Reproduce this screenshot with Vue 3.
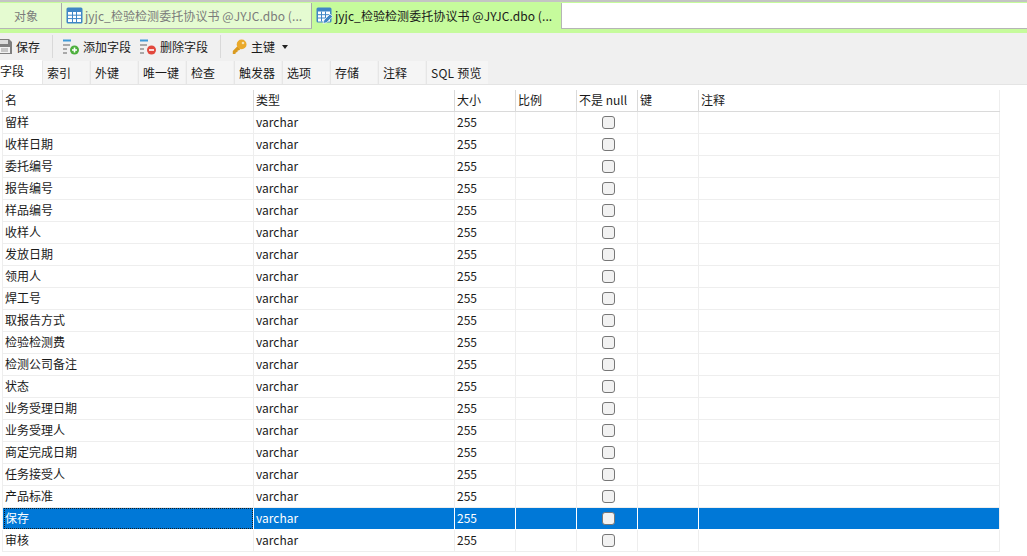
<script setup>
const names = ['留样','收样日期','委托编号','报告编号','样品编号','收样人','发放日期','领用人','焊工号','取报告方式','检验检测费','检测公司备注','状态','业务受理日期','业务受理人','商定完成日期','任务接受人','产品标准','保存','审核']
const tabs = ['索引','外键','唯一键','检查','触发器','选项','存储','注释','SQL 预览']
const headers = ['名','类型','大小','比例','不是 null','键','注释']
const rows = names.map((name, i) => ({ name, selected: i === 18 }))
</script>

<template>
  <div class="app">
    <div class="tabbar">
      <div class="tab objects">对象</div>
      <div class="tab doc">
        <svg class="tabicon" width="17" height="17" viewBox="0 0 17 17">
          <rect x="0.5" y="0.5" width="16" height="16" rx="1.5" fill="#3f86c6"/>
          <path d="M2 5h13v10H2z" fill="#fff"/>
          <path d="M6.5 5v10M10.5 5v10M2 8.2h13M2 11.6h13" stroke="#3f86c6" stroke-width="1"/>
        </svg>
        <span class="muted">jyjc_检验检测委托协议书 @JYJC.dbo (...</span>
      </div>
      <div class="tab doc active">
        <svg class="tabicon" width="17" height="17" viewBox="0 0 17 17">
          <rect x="0.5" y="0.5" width="15" height="15" rx="1.5" fill="#3f86c6"/>
          <path d="M2 4.5h12v10H2z" fill="#fff"/>
          <path d="M5.5 4.5v10M9.5 4.5v10M2 7.7h12M2 11h12" stroke="#3f86c6" stroke-width="1"/>
          <path d="M7 16.5l1-3.5 6-6 2.6 2.6-6 6z" fill="#3f86c6" stroke="#fff" stroke-width="0.7"/>
        </svg>
        <span>jyjc_检验检测委托协议书 @JYJC.dbo (...</span>
      </div>
      <div class="blank"></div>
    </div>

    <div class="toolbar">
      <div class="tool save">
        <svg width="15" height="15" viewBox="0 0 15 15">
          <path d="M0 0h12l3 3v12H0z" fill="#7f7f7f"/>
          <rect x="3" y="1" width="8" height="4" fill="#dcdcdc"/>
          <rect x="2" y="8" width="11" height="6" fill="#f2f2f2"/>
          <path d="M4 10h7M4 12h7" stroke="#9a9a9a"/>
        </svg>
        <span>保存</span>
      </div>
      <div class="sep"></div>
      <div class="tool add">
        <svg width="17" height="17" viewBox="0 0 17 17">
          <path d="M0 1.5h8" stroke="#3f9ad8" stroke-width="2"/>
          <path d="M0 6h7M0 10h4M0 14h4" stroke="#a9a9a9" stroke-width="2"/>
          <circle cx="11.5" cy="11" r="4.5" fill="#4caf3c"/>
          <path d="M9 11h5M11.5 8.5v5" stroke="#fff" stroke-width="1.6"/>
        </svg>
        <span>添加字段</span>
      </div>
      <div class="tool del">
        <svg width="17" height="17" viewBox="0 0 17 17">
          <path d="M0 1.5h8" stroke="#3f9ad8" stroke-width="2"/>
          <path d="M0 6h7M0 10h4M0 14h4" stroke="#a9a9a9" stroke-width="2"/>
          <circle cx="11.5" cy="11" r="4.5" fill="#e2483d"/>
          <path d="M9 11h5" stroke="#fff" stroke-width="1.6"/>
        </svg>
        <span>删除字段</span>
      </div>
      <div class="sep second"></div>
      <div class="tool key">
        <svg width="15" height="16" viewBox="0 0 15 16">
          <path d="M5.2 7.6 0.8 12v3h2.6l.4-1.6 1.6-.3.3-1.6 1.5-.3 1.3-1.3z" fill="#d99a1f"/>
          <circle cx="9.6" cy="5.4" r="4.9" fill="#eaa92a"/>
          <circle cx="11" cy="4" r="1.3" fill="#f7e3b0"/>
        </svg>
        <span>主键</span>
        <i class="caret"></i>
      </div>
    </div>

    <div class="subtabs">
      <div class="subtab current">字段</div>
      <div v-for="t in tabs" :key="t" class="subtab">{{ t }}</div>
    </div>

    <div class="grid">
      <div class="row head">
        <div v-for="h in headers" :key="h" class="cell">{{ h }}</div>
      </div>
      <div v-for="r in rows" :key="r.name" class="row" :class="{ selected: r.selected }">
        <div class="cell"><span class="name">{{ r.name }}</span></div>
        <div class="cell">varchar</div>
        <div class="cell">255</div>
        <div class="cell"></div>
        <div class="cell check"><i class="box"></i></div>
        <div class="cell"></div>
        <div class="cell"></div>
      </div>
    </div>
  </div>
</template>

<style>
html, body { margin: 0; background: #fff; overflow: hidden; }
</style>

<style scoped>
.app {
  width: 1027px;
  height: 556px;
  overflow: hidden;
  background: #fff;
  font: 12px/16px "Noto Sans CJK SC", "Open Sans", sans-serif;
  color: #1a1a1a;
}
.tabbar {
  height: 33px;
  box-sizing: border-box;
  border-top: 2px solid #c4c4c4;
  padding-top: 1px;
  background: #c6fb9c;
  display: flex;
}
.tab {
  height: 26px;
  box-sizing: border-box;
  display: flex;
  align-items: center;
  flex: none;
  border-bottom: 1px solid #b5b5b5;
}
.objects {
  width: 62px;
  background: #e5fbd1;
  border-right: 1px solid #a9a9a9;
  color: #7b7b7b;
  padding-left: 14px;
}
.doc {
  width: 250px;
  padding-left: 4px;
  gap: 2px;
  background: #e5fbd1;
  border-right: 1px solid #a9a9a9;
  white-space: nowrap;
  letter-spacing: 0.07px;
}
.doc.active {
  background: #c6fb9c;
  border-right: 0;
  border-bottom: 0;
  padding-left: 4px;
  height: 30px;
  padding-bottom: 5px;
  width: 249px;
}
.muted { color: #7b7b7b; }
.tabicon { flex: none; }
.blank {
  flex: 1;
  height: 26px;
  background: #fff;
  border-left: 1px solid #b5b5b5;
  border-bottom: 1px solid #b5b5b5;
  box-sizing: border-box;
}
.toolbar {
  height: 27px;
  background: #f0f0f0;
  display: flex;
  align-items: center;
  margin-left: -3px;
}
.tool { display: flex; align-items: center; flex: none; }
.save { gap: 4px; width: 55px; }
.sep { width: 1px; height: 23px; background: #d9d9d9; flex: none; margin: 0 10px 0 0; }
.sep.second { margin: 0 11px 0 12px; }
.add { gap: 3px; width: 77px; }
.add svg, .del svg { margin-top: 1px; }
.del { gap: 3px; }
.key { gap: 4px; }
.caret {
  width: 0;
  height: 0;
  margin-left: 3px;
  border: 3px solid transparent;
  border-top: 4px solid #222;
  border-bottom: 0;
}
.subtabs {
  height: 25px;
  box-sizing: border-box;
  background: #f0f0f0;
  display: flex;
  margin-left: -2px;
  align-items: flex-end;
  border-bottom: 1px solid #e4e4e4;
}
.subtab {
  width: 47px;
  height: 23px;
  box-sizing: border-box;
  margin-right: 1px;
  padding-left: 4px;
  line-height: 23px;
  background: #f5f5f5;
  border-left: 1px solid #e6e6e6;
  white-space: nowrap;
}
.subtab.current {
  width: 44px;
  height: 24px;
  line-height: 22px;
  padding-left: 2px;
  background: #fff;
  border: 0;
  margin-right: 0;
}
.subtab:last-child { width: 62px; letter-spacing: 0.25px; }
.grid {
  margin-top: 5px;
  margin-left: 2px;
  width: 998px;
}
.row {
  display: grid;
  grid-template-columns: 251px 201px 61px 61px 61px 61px 302px;
  height: 22px;
  box-sizing: border-box;
  border-bottom: 1px solid #eeeeee;
}
.head { border-bottom: 1px solid #dadada; }
.cell {
  box-sizing: border-box;
  border-left: 1px solid #eeeeee;
  padding-left: 2px;
  line-height: 20px;
  white-space: nowrap;
  overflow: hidden;
}
.row .cell:last-child { border-right: 1px solid #eeeeee; }
.head .cell { border-color: #dadada; }
.check { display: flex; align-items: center; justify-content: center; }
.box {
  width: 13px;
  height: 13px;
  box-sizing: border-box;
  background: #f2f2f2;
  border: 1px solid #777;
  border-radius: 3px;
}
.selected { background: #0078d7; color: #fff; border-bottom-color: #fff; }
.selected .cell { border-color: #fff; }
.selected .cell:first-child { border-color: #eeeeee; }
.selected .name {
  display: block;
  height: 21px;
  margin-left: -1px;
  padding-left: 1px;
  outline: 1px dotted #1a1a1a;
  outline-offset: -1px;
}
</style>
